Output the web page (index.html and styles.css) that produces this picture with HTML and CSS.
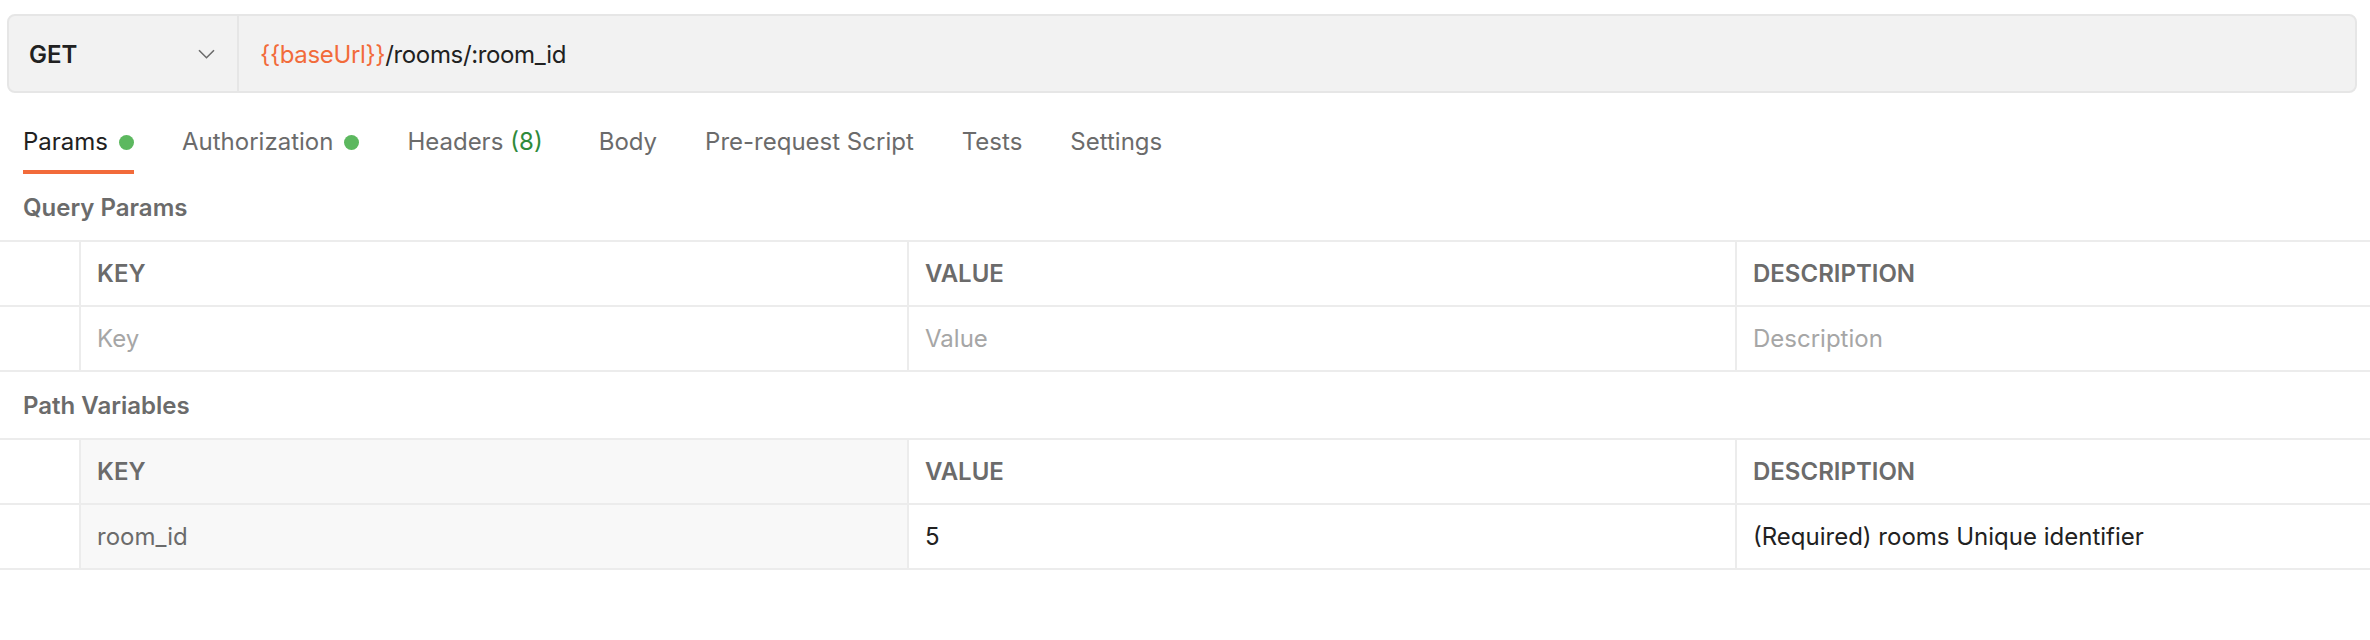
FILE: index.html
```html
<!DOCTYPE html>
<html lang="en">
<head>
<meta charset="utf-8">
<title>GET rooms/:room_id</title>
<link rel="stylesheet" href="styles.css">
</head>
<body>
  <div class="urlbar">
    <div class="method">
      <span class="method-name">GET</span>
      <svg class="chevron" width="17" height="10" viewBox="0 0 17 10" aria-hidden="true"><path d="M1 1.2 L8.5 8.7 L16 1.2" fill="none" stroke="#6b6b6b" stroke-width="1.6"/></svg>
    </div>
    <div class="url"><span class="var">{{baseUrl}}</span>/rooms/:room_id</div>
  </div>

  <nav class="tabs">
    <div class="tab active">Params <span class="dot"></span></div>
    <div class="tab">Authorization <span class="dot"></span></div>
    <div class="tab tab-headers">Headers <span class="count">(8)</span></div>
    <div class="tab">Body</div>
    <div class="tab">Pre-request Script</div>
    <div class="tab">Tests</div>
    <div class="tab">Settings</div>
  </nav>

  <div class="section-title">Query Params</div>
  <div class="kv-table">
    <div class="cell"></div>
    <div class="cell head">KEY</div>
    <div class="cell head">VALUE</div>
    <div class="cell head">DESCRIPTION</div>
    <div class="cell"></div>
    <div class="cell placeholder">Key</div>
    <div class="cell placeholder">Value</div>
    <div class="cell placeholder">Description</div>
  </div>

  <div class="section-title">Path Variables</div>
  <div class="kv-table">
    <div class="cell"></div>
    <div class="cell head readonly">KEY</div>
    <div class="cell head">VALUE</div>
    <div class="cell head">DESCRIPTION</div>
    <div class="cell"></div>
    <div class="cell readonly muted">room_id</div>
    <div class="cell">5</div>
    <div class="cell">(Required) rooms Unique identifier</div>
  </div>
</body>
</html>
```

FILE: styles.css
```css
* {
  box-sizing: border-box;
}

html, body {
  margin: 0;
  padding: 0;
  background: #ffffff;
}

body {
  font-family: Inter, "Noto Sans", "Liberation Sans", sans-serif;
  font-size: 24px;
  line-height: 32px;
  color: #212121;
}

.urlbar {
  display: flex;
  height: 79px;
  margin: 14px 13px 0 7px;
  background: #f2f2f2;
  border: 2px solid #e6e6e6;
  border-radius: 8px;
}

.method {
  display: flex;
  align-items: center;
  width: 230px;
  padding: 0 22px 0 20px;
  border-right: 2px solid #e6e6e6;
}

.method-name {
  flex: 1;
  font-weight: 600;
  color: #212121;
  padding-top: 3px;
}

.chevron {
  display: block;
}

.url {
  display: flex;
  align-items: center;
  padding: 2px 0 0 21px;
  color: #212121;
  letter-spacing: -0.35px;
}

.url .var {
  color: #f26b3a;
}

.tabs {
  display: flex;
  gap: 48px;
  padding: 33px 0 0 23px;
}

.tab {
  display: flex;
  align-items: center;
  gap: 11px;
  padding-bottom: 12px;
  border-bottom: 4px solid transparent;
  color: #6b6b6b;
  white-space: nowrap;
}

.tab.active {
  color: #212121;
  border-bottom-color: #f26b3a;
}

.tab-headers {
  gap: 7px;
  padding-right: 8px;
}

.dot {
  width: 15px;
  height: 15px;
  border-radius: 50%;
  background: #5cb85f;
}

.count {
  color: #2f8a3b;
}

.section-title {
  padding: 18px 23px 16px;
  font-weight: 600;
  color: #6b6b6b;
}

.kv-table {
  display: grid;
  grid-template-columns: 79px 828px 828px 1fr;
  grid-auto-rows: 65px;
  border-bottom: 2px solid #ececec;
}

.cell {
  display: flex;
  align-items: center;
  padding: 1px 16px 0;
  border-top: 2px solid #ececec;
  border-left: 2px solid #ececec;
  white-space: nowrap;
  color: #212121;
}

.cell:nth-child(4n+1) {
  border-left: none;
}

.cell.head {
  font-weight: 600;
  color: #6b6b6b;
}

.cell.placeholder {
  color: #a6a6a6;
}

.cell.readonly {
  background: #f8f8f8;
}

.cell.muted {
  color: #6b6b6b;
}
```
